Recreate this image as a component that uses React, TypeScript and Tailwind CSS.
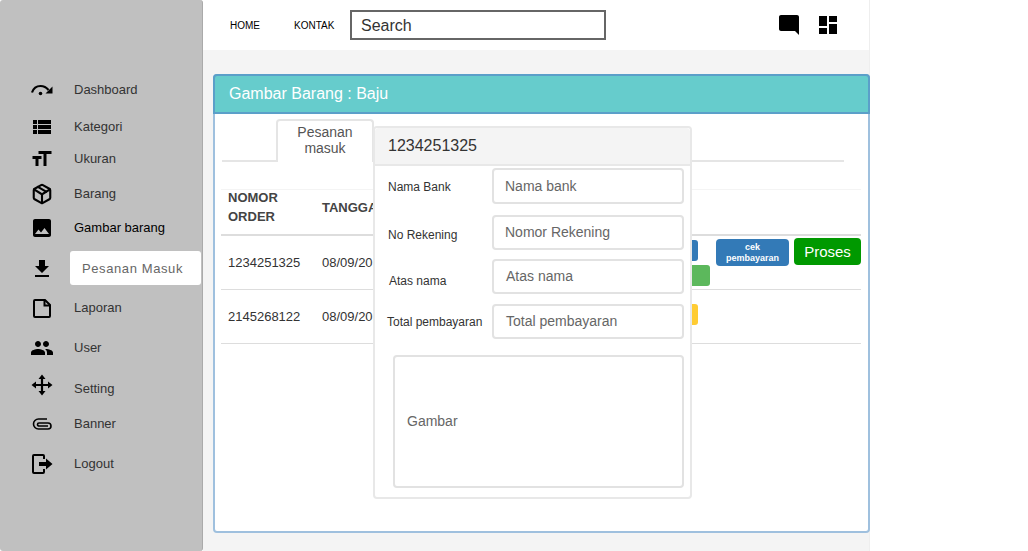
import React from "react";
import {
  MdViewList,
  MdTextFields,
  MdImage,
  MdFileDownload,
  MdPeople,
  MdModeComment,
  MdDashboard,
} from "react-icons/md";
import { LuPackage } from "react-icons/lu";

const DashIcon = () => (
  <svg width="24" height="24" viewBox="0 0 24 24" fill="none">
    <path d="M2 14.500C3.500 10 7 8 10.500 8c3.500 0 6 1.500 8 4" stroke="black" strokeWidth="2.200" />
    <path d="M22.500 8.500v7h-7z" fill="black" />
    <circle cx="10.500" cy="15.500" r="1.800" fill="black" />
  </svg>
);

const FileIcon = () => (
  <svg width="24" height="24" viewBox="0 0 24 24" fill="none" stroke="black" strokeWidth="2">
    <path d="M5 4h10l5 5v11a1 1 0 0 1-1 1H5a1 1 0 0 1-1-1V5a1 1 0 0 1 1-1z" />
    <path d="M14.500 4v5.500H20" />
  </svg>
);

const MoveIcon = () => (
  <svg width="24" height="24" viewBox="0 0 24 24" fill="black">
    <path d="M12 5v14M5 12h14" stroke="black" strokeWidth="2.200" fill="none" />
    <path d="M12 1.500 15.500 6h-7zM12 22.500 8.500 18h7zM1.500 12 6 8.500v7zM22.500 12 18 15.500v-7z" />
  </svg>
);

const ClipIcon = () => (
  <svg width="24" height="24" viewBox="0 0 24 24" fill="none" stroke="black" strokeWidth="1.600">
    <path d="M17 7H8.500a5 5 0 0 0 0 10H18a3 3 0 0 0 0-6H9a1.500 1.500 0 0 0 0 3H18" />
  </svg>
);

const LogoutIcon = () => (
  <svg width="24" height="24" viewBox="0 0 24 24" fill="none">
    <path d="M14 7V4a1 1 0 0 0-1-1H4a1 1 0 0 0-1 1v16a1 1 0 0 0 1 1h9a1 1 0 0 0 1-1v-3" stroke="black" strokeWidth="2" />
    <path d="M9 10h7V6.500l6.500 5.500-6.500 5.500V14H9z" fill="black" />
  </svg>
);

const menu = [
  { label: "Dashboard", icon: <DashIcon />, gap: "mt-0" },
  { label: "Kategori", icon: <MdViewList size={24} />, gap: "mt-[9px]" },
  { label: "Ukuran", icon: <MdTextFields size={24} className="-scale-x-100" />, gap: "mt-[4px]" },
  { label: "Barang", icon: <LuPackage size={22} strokeWidth={2.300} />, gap: "mt-[7px]" },
  { label: "Gambar barang", icon: <MdImage size={24} />, gap: "mt-[6px]", dark: true },
  { label: "Pesanan Masuk", icon: <MdFileDownload size={24} />, gap: "mt-[13px]", active: true },
  { label: "Laporan", icon: <FileIcon />, gap: "mt-[11px]" },
  { label: "User", icon: <MdPeople size={24} />, gap: "mt-[12px]" },
  { label: "Setting", icon: <MoveIcon />, gap: "mt-[13px]", raised: true },
  { label: "Banner", icon: <ClipIcon />, gap: "mt-[7px]" },
  { label: "Logout", icon: <LogoutIcon />, gap: "mt-[12px]" },
];

const orders = [
  { no: "1234251325", date: "08/09/2018" },
  { no: "2145268122", date: "08/09/2018" },
];

const fields = [
  { label: "Nama Bank", placeholder: "Nama bank", row: "h-[47px]", box: "h-[36px] pl-[11px]", text: "w-[104px] pt-px" },
  { label: "No Rekening", placeholder: "Nomor Rekening", row: "h-[44px]", box: "h-[35px] pl-[11px]", text: "w-[104px] pt-[2px]" },
  { label: "Atas nama", placeholder: "Atas nama", row: "h-[45px]", box: "h-[35px] pl-[12px]", text: "w-[104px] pt-[4px] pl-px" },
  { label: "Total pembayaran", placeholder: "Total pembayaran", row: "h-[51px]", box: "h-[35px] pl-[12px]", text: "w-[105px] pt-0 -ml-px" },
];

const App: React.FC = () => {
  return (
    <div className="flex w-[1028px] h-[551px] bg-white overflow-hidden font-['Liberation_Sans',Arial,sans-serif] text-[#333]">
      {/* sidebar */}
      <div className="w-[203px] h-full flex-shrink-0 bg-[#c0c0c0] rounded-[3px] border-r border-[#aaaaaa] pt-[76px] pl-[29px]">
        {menu.map((item) => (
          <div className={`flex items-center h-[28px] ${item.gap}`} key={item.label}>
            <div className={`w-[26px] flex justify-center text-black ${item.raised ? "-mt-[8px]" : ""}`}>{item.icon}</div>
            {item.active ? (
              <div className="ml-[15px] -mt-[2px] w-[131px] h-[34px] flex-shrink-0 flex items-center pl-[12px] pt-[2px] bg-white rounded-[3px] text-[13px] tracking-[0.6px] text-[#666]">
                {item.label}
              </div>
            ) : (
              <span className={`ml-[19px] text-[13px] ${item.dark ? "text-black" : "text-[#333]"}`}>
                {item.label}
              </span>
            )}
          </div>
        ))}
      </div>

      {/* main */}
      <div className="w-[667px] h-full flex-shrink-0 bg-[#f4f4f4] border-r border-[#eeeeee]">
        <div className="h-[50px] bg-white flex items-center pl-[27px]">
          <span className="text-[10px] text-black w-[64px]">HOME</span>
          <span className="text-[10px] text-black w-[56px]">KONTAK</span>
          <div className="w-[256px] h-[30px] border-2 border-[#666666] flex items-center pl-[9px] pt-px text-[16px] text-[#333]">
            Search
          </div>
          <MdModeComment size={24} className="ml-[171px] text-black" />
          <MdDashboard size={24} className="ml-[15px] text-black" />
        </div>

        {/* panel */}
        <div className="relative ml-[10px] mt-[24px] w-[657px] h-[459px] bg-white rounded-[4px] border-2 border-[#9fc0de]">
          <div className="h-[40px] bg-[#66cccc] border-2 border-[#5b9fc9] rounded-t-[4px] -m-[2px] flex items-center pl-[14px] text-[16px] text-white">
            Gambar Barang : Baju
          </div>

          {/* tabs */}
          <div className="ml-[7px] mt-[7px] w-[622px] h-[43px] border-b-2 border-[#e5e5e5] pl-[54px]">
            <div className="w-[98px] h-[43px] bg-white border-2 border-b-0 border-[#e5e5e5] rounded-t-[4px] text-center text-[14px] leading-[16px] pt-[3px] text-[#555]">
              Pesanan
              <br />
              masuk
            </div>
          </div>

          {/* table */}
          <div className="ml-[6px] mt-[27px] w-[640px] border-t border-[#f4f4f4]">
            <div className="h-[46px] flex items-center border-b-2 border-[#dddddd] pl-[7px] pb-[10px] text-[13px] leading-[19px] font-bold text-[#444]">
              <div className="w-[94px]">
                NOMOR
                <br />
                ORDER
              </div>
              <div>TANGGAL</div>
            </div>
            {orders.map((order, index) => (
              <div className="relative flex items-center h-[54px] border-b border-[#dddddd] pl-[7px] text-[13px] text-[#333]" key={order.no}>
                <div className="w-[94px]">{order.no}</div>
                <div>{order.date}</div>
                {index === 0 ? (
                  <div className="absolute left-[400px] top-0 w-[240px] h-full">
                    <div className="absolute left-[50px] top-[4px] w-[27px] h-[21px] bg-[#337ab7] rounded-[3px]" />
                    <div className="absolute left-[50px] top-[29px] w-[39px] h-[21px] bg-[#5cb85c] rounded-[3px]" />
                    <div className="absolute left-[95px] top-[3px] w-[73px] h-[27px] bg-[#337ab7] rounded-[4px] text-white text-[9px] leading-[11px] font-bold text-center pt-[3px]">
                      cek
                      <br />
                      pembayaran
                    </div>
                    <div className="absolute left-[173px] top-[2px] w-[67px] h-[27px] bg-[#009900] rounded-[4px] text-white text-[15px] leading-[27px] text-center">
                      Proses
                    </div>
                  </div>
                ) : (
                  <div className="absolute left-[450px] top-[14px] w-[27px] h-[21px] bg-[#ffcc33] rounded-[3px]" />
                )}
              </div>
            ))}
          </div>

          {/* modal */}
          <div className="absolute left-[158px] top-[50px] w-[319px] h-[373px] bg-white border-2 border-[#e8e8e8] rounded-[4px]">
            <div className="h-[38px] bg-[#f4f4f4] border-b-2 border-[#e8e8e8] rounded-t-[4px] flex items-center pl-[13px] text-[16px] text-[#333]">
              1234251325
            </div>
            <div className="pt-[2px] pl-[13px] pr-[6px]">
              {fields.map((field) => (
                <div className={`flex items-start ${field.row}`} key={field.label}>
                  <div className={`flex-shrink-0 text-[12px] leading-[36px] text-[#333] whitespace-nowrap ${field.text}`}>
                    {field.label}
                  </div>
                  <div className={`flex-1 bg-white border-2 border-[#e2e2e2] rounded-[4px] flex items-center text-[14px] text-[#666] ${field.box}`}>
                    {field.placeholder}
                  </div>
                </div>
              ))}
              <div className="ml-[5px] h-[133px] border-2 border-[#e2e2e2] rounded-[4px] flex items-center pl-[12px] text-[14px] text-[#666]">
                Gambar
              </div>
            </div>
          </div>
        </div>
      </div>
    </div>
  );
};

export default App;
